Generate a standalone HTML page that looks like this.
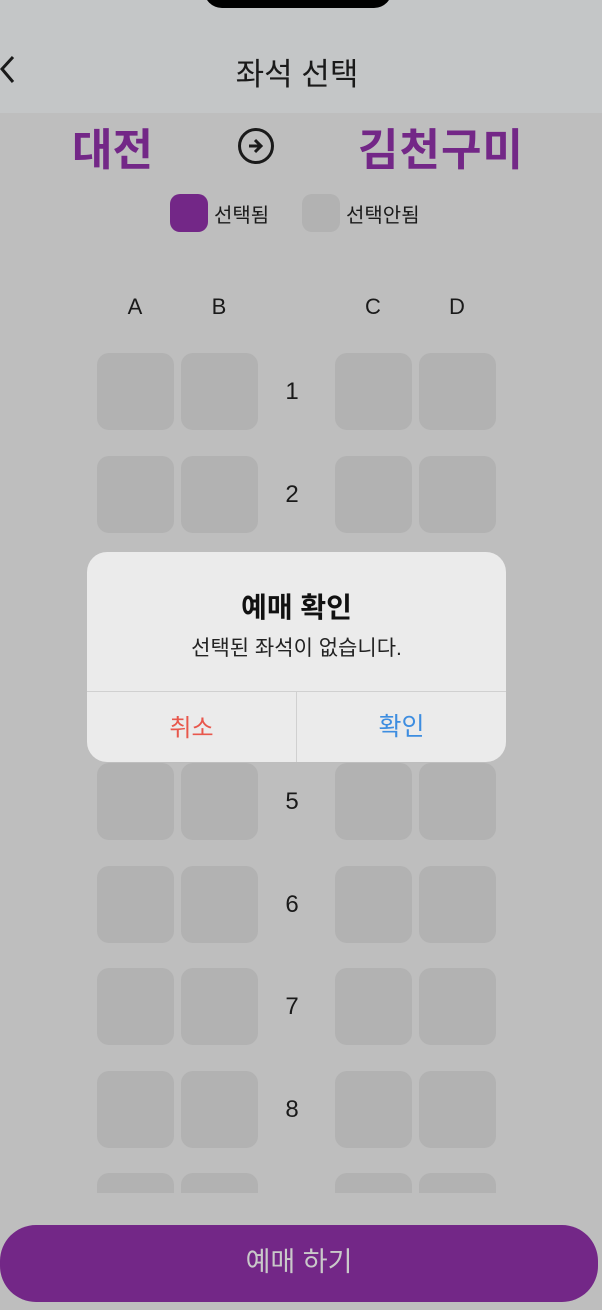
<!DOCTYPE html>
<html><head><meta charset="utf-8"><style>
*{margin:0;padding:0;box-sizing:border-box}
body{width:602px;height:1310px;background:#bebebe;position:relative;overflow:hidden;font-family:"Liberation Sans","Noto Sans CJK KR",sans-serif;color:#1a1a1a}
.abs{position:absolute}
.hdr{left:0;top:0;width:602px;height:113px;background:#c4c6c7}
.notch{left:204px;top:-20px;width:188px;height:28px;background:#000;border-radius:0 0 18px 18px}
.seat{position:absolute;width:77px;height:77px;background:#b2b2b2;border-radius:12px}
.num{position:absolute;width:40px;text-align:center;font-size:24px;left:272px}
.col{position:absolute;top:294px;font-size:22px;width:30px;text-align:center}
</style></head><body>
<div class="abs hdr"></div>
<div class="abs notch"></div>
<svg class="abs" style="left:0;top:54px" width="18" height="32" viewBox="0 0 18 32"><path d="M13 3 L2 15 L13 28" fill="none" stroke="#1a1a1a" stroke-width="3"/></svg>
<div class="abs" style="left:0;width:594px;top:49px;text-align:center;font-size:31px">좌석 선택</div>
<div class="abs" style="left:72px;top:114px;font-size:44px;font-weight:bold;color:#732787">대전</div>
<div class="abs" style="left:358px;top:114px;font-size:44px;font-weight:bold;color:#732787;letter-spacing:1px">김천구미</div>
<svg class="abs" style="left:236px;top:126px" width="40" height="40" viewBox="0 0 40 40"><circle cx="20" cy="20" r="16.5" fill="none" stroke="#1a1a1a" stroke-width="3"/><path d="M13 20h12M19 14l6 6-6 6" fill="none" stroke="#1a1a1a" stroke-width="3"/></svg>
<div class="abs" style="left:170px;top:194px;width:38px;height:38px;border-radius:10px;background:#732787"></div>
<div class="abs" style="left:214px;top:199px;font-size:20px">선택됨</div>
<div class="abs" style="left:302px;top:194px;width:38px;height:38px;border-radius:10px;background:#b2b2b2"></div>
<div class="abs" style="left:346px;top:199px;font-size:20px">선택안됨</div>
<div class="col" style="left:120px">A</div><div class="col" style="left:204px">B</div><div class="col" style="left:358px">C</div><div class="col" style="left:442px">D</div>
<div id="seats"></div>
<script>
var h='';for(var i=0;i<9;i++){var y=353+i*102.5;for(var x of [97,181,335,419])h+='<div class="seat" style="left:'+x+'px;top:'+y+'px;'+(i==8?'height:20px;border-radius:12px 12px 0 0':'')+'"></div>';if(i<8)h+='<div class="num" style="top:'+(y+25)+'px">'+(i+1)+'</div>';}
document.getElementById('seats').innerHTML=h;
</script>
<div class="abs" style="left:87px;top:552px;width:419px;height:210px;background:#ebebeb;border-radius:20px;overflow:hidden">
<div class="abs" style="left:0;width:419px;top:34px;text-align:center;font-size:28px;font-weight:bold;color:#111">예매 확인</div>
<div class="abs" style="left:0;width:419px;top:80px;text-align:center;font-size:21px;color:#222">선택된 좌석이 없습니다.</div>
<div class="abs" style="left:0;top:139px;width:419px;height:1px;background:#d0d0d0"></div>
<div class="abs" style="left:209px;top:139px;width:1px;height:71px;background:#d0d0d0"></div>
<div class="abs" style="left:0;width:209px;top:156px;text-align:center;font-size:24px;color:#e8574c">취소</div>
<div class="abs" style="left:210px;width:209px;top:155px;text-align:center;font-size:25px;color:#3d8de0">확인</div>
</div>
<div class="abs" style="left:0;top:1225px;width:598px;height:77px;background:#732787;border-radius:36px;text-align:center;line-height:74px;font-size:27px;color:#c9c9c9">예매 하기</div>
</body></html>
